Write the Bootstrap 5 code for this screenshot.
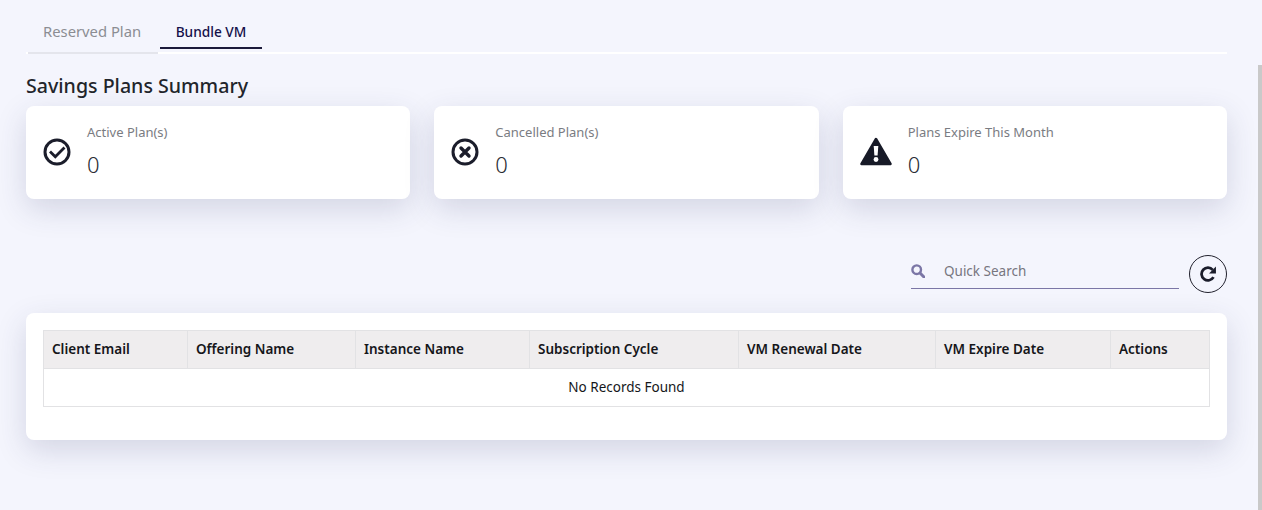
<!DOCTYPE html>
<html lang="en">
<head>
    <meta charset="UTF-8">
    <meta name="viewport" content="width=device-width, initial-scale=1.0">
    <title>Savings Plans</title>
    <link href="https://cdn.jsdelivr.net/npm/bootstrap@5.3.0/dist/css/bootstrap.min.css" rel="stylesheet">
    <style>
        html, body {
            height: 510px;
        }
        body {
            background-color: #f4f5fd;
            font-family: "Noto Sans", "Liberation Sans", sans-serif;
            color: #212529;
            overflow: hidden;
        }
        .page-wrap {
            height: 510px;
            padding: 12px 35px 0 26px;
        }
        .plan-tabs {
            height: 42px;
            border-bottom: 2px solid #fff;
        }
        .plan-tab {
            display: block;
            line-height: 39px;
            text-decoration: none;
        }
        .tab-off {
            width: 134px;
            height: 40px;
            padding-left: 17px;
            font-size: 14.8px;
            color: #8b8d93;
            box-shadow: 0 4px 0 -2px #e4e5ec;
        }
        .tab-on {
            width: 102px;
            height: 37px;
            text-align: center;
            color: #14104a;
            font-size: 13.7px;
            font-weight: 500;
            border-bottom: 2px solid #1b1a3a;
        }
        .summary-title {
            font-size: 19.6px;
            font-weight: 500;
            line-height: 24px;
            margin: 20px 0 8px;
            color: #22252b;
        }
        .stat-row {
            gap: 24px;
        }
        .stat-box, .table-box {
            background: #fff;
            border-radius: 8px;
            box-shadow: 0 10px 30px rgba(50, 55, 100, .17);
        }
        .stat-box {
            flex: 1 1 0;
            height: 93px;
            padding: 18px 17px 0;
        }
        .stat-ico {
            width: 29px;
            height: 28px;
            margin-top: 14px;
            margin-right: 15px;
            flex-shrink: 0;
        }
        .stat-warn {
            width: 32px;
            height: 29px;
            margin-top: 13px;
            margin-right: 16px;
        }
        .stat-label {
            font-size: 13px;
            line-height: 16px;
            color: #7a7c82;
        }
        .stat-value {
            font-size: 22px;
            line-height: 26px;
            margin-top: 11px;
            font-weight: 300;
            color: #2a2d35;
        }
        .search-row {
            margin-top: 54px;
            gap: 10px;
        }
        .search-field {
            width: 268px;
            height: 36px;
            border-bottom: 1px solid #7b76a6;
            gap: 19px;
        }
        .search-field input {
            border: 0;
            background: transparent;
            outline: 0;
            font-size: 13.5px;
            color: #6f6e78;
            width: 220px;
            padding: 2px 0 0;
        }
        .search-field input::placeholder {
            color: #77767f;
            opacity: 1;
        }
        .refresh-btn {
            width: 38px;
            height: 38px;
            margin-top: 2px;
            padding: 0;
            border: 1px solid #22222e;
            border-radius: 50%;
            background: transparent;
        }
        .table-box {
            margin-top: 20px;
            height: 127px;
            padding: 17px;
        }
        .plans-table {
            table-layout: fixed;
            width: 100%;
            border-collapse: collapse;
            font-size: 13.5px;
        }
        .plans-table th, .plans-table td {
            border: 1px solid #e2e2e4;
            height: 38px;
            padding: 0 8px;
            color: #15161a;
        }
        .plans-table th {
            background: #efedee;
            font-weight: 600;
        }
        .plans-table td {
            text-align: center;
        }
        .w-a { width: 144px; }
        .w-b { width: 168px; }
        .w-c { width: 174px; }
        .w-d { width: 209px; }
        .w-e { width: 197px; }
        .w-f { width: 175px; }
        .w-g { width: 99px; }
        .fake-scroll {
            position: absolute;
            top: 65px;
            right: 0;
            width: 4px;
            height: 445px;
            background: #c9c9c9;
        }
    </style>
</head>
<body>
<div class="page-wrap">
    <div class="plan-tabs d-flex">
        <a class="plan-tab tab-off" href="#">Reserved Plan</a>
        <a class="plan-tab tab-on" href="#">Bundle VM</a>
    </div>

    <h5 class="summary-title">Savings Plans Summary</h5>

    <div class="stat-row d-flex">
        <div class="stat-box d-flex">
            <svg class="stat-ico" viewBox="0 0 29 28" fill="none" stroke="#1b1d2b" stroke-width="3">
                <circle cx="14" cy="14" r="12"/>
                <path d="M8 14.5l4.3 4.3 8.2-8.2" stroke-linecap="square" stroke-width="2.8"/>
            </svg>
            <div>
                <div class="stat-label">Active Plan(s)</div>
                <div class="stat-value">0</div>
            </div>
        </div>
        <div class="stat-box d-flex">
            <svg class="stat-ico" viewBox="0 0 29 28" fill="none" stroke="#1b1d2b" stroke-width="3">
                <circle cx="14" cy="14" r="12"/>
                <path d="M10 10l8 8M18 10l-8 8" stroke-linecap="round" stroke-width="3.4"/>
            </svg>
            <div>
                <div class="stat-label">Cancelled Plan(s)</div>
                <div class="stat-value">0</div>
            </div>
        </div>
        <div class="stat-box d-flex">
            <svg class="stat-ico stat-warn" viewBox="0 0 32 29">
                <path d="M16 2L30.500 27H1.500z" fill="#171a27" stroke="#171a27" stroke-width="2.500" stroke-linejoin="round"/>
                <path d="M13.700 9h4.600l-.7 9.500h-3.200z" fill="#fff"/>
                <circle cx="16" cy="22.500" r="2.400" fill="#fff"/>
            </svg>
            <div>
                <div class="stat-label">Plans Expire This Month</div>
                <div class="stat-value">0</div>
            </div>
        </div>
    </div>

    <div class="search-row d-flex justify-content-end">
        <div class="search-field d-flex align-items-center">
            <svg width="14" height="14" viewBox="0 0 14 14" fill="none" stroke="#7b76a6">
                <circle cx="5.700" cy="5.700" r="4.300" stroke-width="2.400"/>
                <path d="M9 9l4 4" stroke-width="3" stroke-linecap="round"/>
            </svg>
            <input type="text" placeholder="Quick Search">
        </div>
        <button class="refresh-btn d-flex align-items-center justify-content-center" type="button">
            <svg width="17" height="17" viewBox="0 0 16 16" fill="none">
                <path d="M12.700 10.500A6 6 0 1 1 12 3.600" stroke="#1b1d2b" stroke-width="2.600"/>
                <path d="M15 0.500V7H8.500z" fill="#1b1d2b"/>
            </svg>
        </button>
    </div>

    <div class="table-box">
        <table class="plans-table">
            <thead>
                <tr>
                    <th class="w-a">Client Email</th>
                    <th class="w-b">Offering Name</th>
                    <th class="w-c">Instance Name</th>
                    <th class="w-d">Subscription Cycle</th>
                    <th class="w-e">VM Renewal Date</th>
                    <th class="w-f">VM Expire Date</th>
                    <th class="w-g">Actions</th>
                </tr>
            </thead>
            <tbody>
                <tr>
                    <td colspan="7">No Records Found</td>
                </tr>
            </tbody>
        </table>
    </div>
</div>
<div class="fake-scroll"></div>
<script src="https://cdn.jsdelivr.net/npm/bootstrap@5.3.0/dist/js/bootstrap.bundle.min.js"></script>
</body>
</html>
